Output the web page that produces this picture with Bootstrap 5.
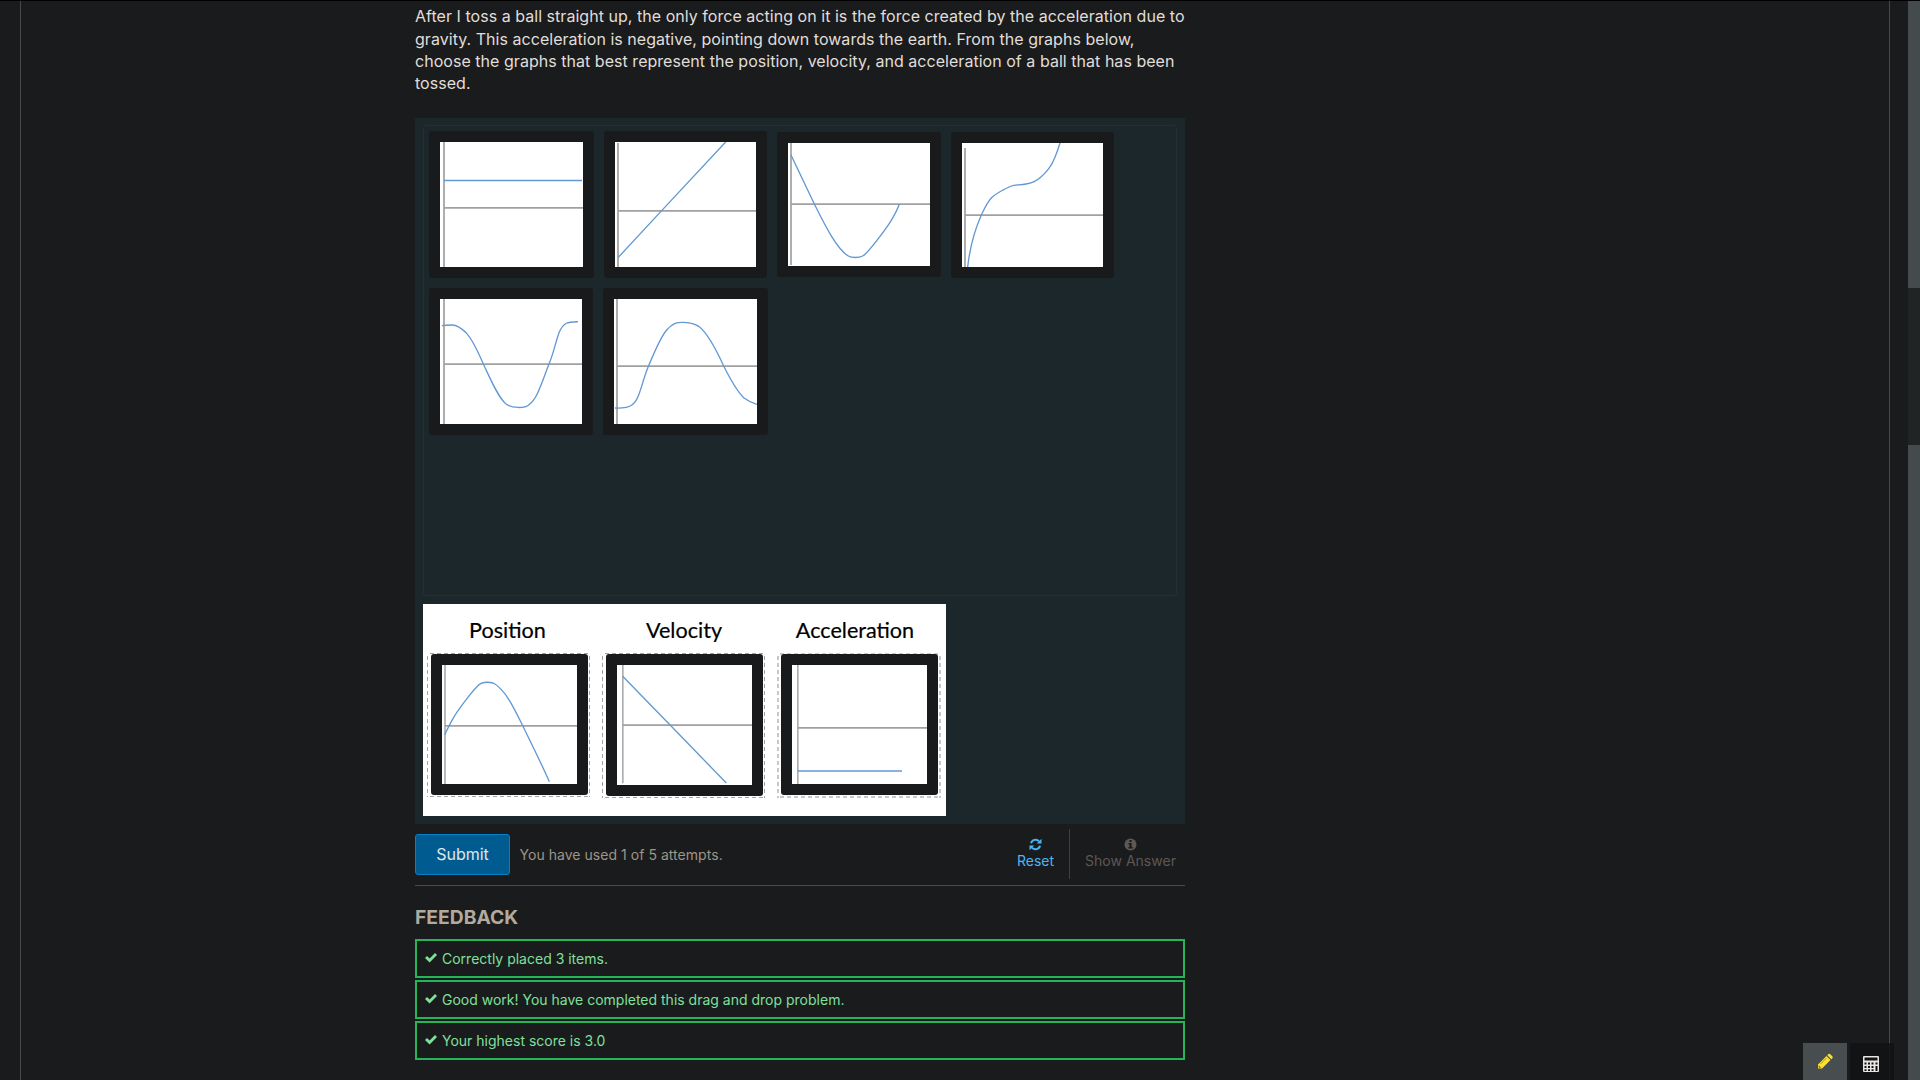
<!DOCTYPE html>
<html lang="en">
<head>
<meta charset="utf-8">
<title>Drag and drop problem</title>
<link href="https://cdn.jsdelivr.net/npm/bootstrap@5.3.0/dist/css/bootstrap.min.css" rel="stylesheet">
<style>
html,body{height:100%;overflow:hidden}
body{background:#1a1b1c;color:#e8e6e3;font-family:Inter,"Liberation Sans",sans-serif;font-size:14px}
.shell{height:1080px;border-top:1px solid #000}
.sheet{width:1870px;margin-left:20px;border:solid #45494b;border-width:0 1px}
.problem{width:770px;margin-left:394px;padding-top:4.200px}
.prompt{font-size:16px;line-height:22.4px;height:112.800px;margin:0;color:#e0deda;white-space:nowrap;letter-spacing:.036px}
.dnd{background:#1c272b;height:706px;padding:7px 8px 8px}
.bank{height:471px;border:1px solid #232f31;border-radius:3px;padding:5px;column-gap:10px;row-gap:10px}
.tile{background:#191a1b;border-radius:3px;padding:11px;display:block}
.tile svg,.glyph{display:block}
.tile svg{background:#fff}
.low{margin-top:1px}
.target{width:523px;height:212px;background:#fff;margin-top:8px;padding-left:4px}
.zone-col{width:175px;flex:none}
.zone-col:last-child{width:164px}
.zone-title{height:49px;padding-top:9px;width:164px;font:21.600px/34px Lato,sans-serif;color:#000;text-align:center;white-space:nowrap;-webkit-text-stroke:.2px #000}
.title-near{padding-right:3px}
.title-far{padding-right:8px}
.zone{--dash:#a4a4a4;--dw:1px;width:163px;height:144px;padding:1px 2px 1px 4px;background:
repeating-linear-gradient(90deg,transparent 0 3px,var(--dash) 3px 7px) 0 0/100% var(--dw) no-repeat,
repeating-linear-gradient(90deg,transparent 0 3px,var(--dash) 3px 7px) 0 100%/100% var(--dw) no-repeat,
repeating-linear-gradient(180deg,transparent 0 3px,var(--dash) 3px 7px) 0 0/var(--dw) 100% no-repeat,
repeating-linear-gradient(180deg,transparent 0 3px,var(--dash) 3px 7px) 100% 0/var(--dw) 100% no-repeat}
.zone .tile{width:157px}
.zone-tall{height:145px}
.zone-soft{--dash:#c8c8c8;--dw:2px;width:164px}
.axis{stroke:#aeaeae;stroke-width:6;fill:none}
.mid{stroke:#a0a0a0;stroke-width:5;fill:none}
.curve{stroke:#6299d2;stroke-width:4;fill:none}
.zone .axis{stroke-width:5}
.actions{height:62px;border-bottom:1px solid #4a4d4e}
.btn-submit{--bs-btn-color:#e0e6ea;--bs-btn-bg:#005b90;--bs-btn-border-color:#0081c9;--bs-btn-border-radius:3px;width:95px;height:41px;margin-top:10px;font-size:16px;padding:0;line-height:39px}
.attempts{color:#9d9588;margin-left:9.500px;font-size:14px;letter-spacing:.04px}
.side-act{height:50px;line-height:16px;font-size:14px;padding-top:9px;margin-top:5px;letter-spacing:.02px}
.side-act span{margin-top:2px}
.reset-act{color:#4cb5f2;width:67px}
.answer-act{color:#5d5853;width:116px;border-left:1px solid #3c4042;padding-left:6px}
.fb-title{font-size:19.300px;line-height:22px;font-weight:700;color:#b2aa9e;margin:20px 0 11px}
.fb-item{height:39px;border:2px solid #24b45a;color:#7fe09c;padding-left:8px;margin-bottom:2px;font-size:14px}
.fb-item svg{margin-right:5px}
.scroll-rail{width:12px;background:#454a4d;padding-top:287px}
.thumb{height:157px;background:#202425}
.tools{left:1803px;top:1043px;gap:3px}
.tool{width:44px;height:37px}
.tool-edit{background:#484d50}
.tool-calc{background:#111213d9}
</style>
<script src="https://cdn.jsdelivr.net/npm/bootstrap@5.3.0/dist/js/bootstrap.bundle.min.js"></script>
</head>
<body>
<div class="shell d-flex justify-content-between">
<main class="sheet">
<section class="problem">
<p class="prompt">After I toss a ball straight up, the only force acting on it is the force created by the acceleration due to<br>gravity. This acceleration is negative, pointing down towards the earth. From the graphs below,<br>choose the graphs that best represent the position, velocity, and acceleration of a ball that has been<br>tossed.</p>
<div class="dnd">
<div class="bank d-flex flex-wrap align-items-start align-content-start">
<div class="tile"><svg width="143" height="125" viewBox="90 96 429 375"><path class="axis" d="M102 96V471"/><path class="mid" d="M102 293.5H519"/><path class="curve" d="M102 211.500H516"/></svg></div>
<div class="tile"><svg width="141" height="125" viewBox="615 96 423 375"><path class="axis" d="M624 99V471"/><path class="mid" d="M624 302.500H1038"/><path class="curve" d="M624 443L755 302L947 96"/></svg></div>
<div class="tile low"><svg width="142" height="123" viewBox="54 99 426 369"><path class="axis" d="M63 99V465"/><path class="mid" d="M63 282.500H480"/><path class="curve" d="M63 135L133 282C160 336 200 418 235 438C246 444 266 444 278 438C294 430 348 356 362 334C373 316 382 300 388 282"/></svg></div>
<div class="tile low"><svg width="141" height="124" viewBox="576 99 423 372"><path class="axis" d="M585 114V471"/><path class="mid" d="M585 315.500H999"/><path class="curve" d="M593 471C600 410 614 360 634 315C645 292 652 276 666 262C682 247 706 236 724 228C734 223 752 226 768 222C789 219 799 214 812 202C828 188 844 169 854 144Q863 122 870 99"/></svg></div>
<div class="tile"><svg width="142" height="125" viewBox="90 87 426 375"><path class="axis" d="M102 87V462"/><path class="mid" d="M102 282.500H516"/><path class="curve" d="M96 167C106 165 116 165 127 165C142 165 160 180 170 190C190 212 205 248 220 282C242 328 264 382 288 402C306 415 344 416 357 404C382 388 398 330 417 282C432 247 437 214 448 186C462 155 476 156 504 155"/></svg></div>
<div class="tile"><svg width="143" height="125" viewBox="612 87 429 375"><path class="axis" d="M621 87V462"/><path class="mid" d="M621 288.500H1041"/><path class="curve" d="M615 414C644 415 656 412 667 404C688 390 694 342 714 292C730 253 750 204 770 180C788 159 800 157 817 157C835 157 852 160 866 169C889 186 919 240 941 288C958 322 978 360 1001 383Q1018 396 1041 403"/></svg></div>
</div>
<div class="target d-flex">
<div class="zone-col"><div class="zone-title title-near">Position</div><div class="zone"><div class="tile"><svg width="135" height="119" viewBox="96 255 405 357"><path class="axis" d="M105 255V612"/><path class="mid" d="M105 437.500H501"/><path class="curve" d="M104 465C109 453 116 440 126 421C140 394 196 319 213 310Q230 304 249 309C263 315 285 338 300 364C318 395 328 417 340 441C360 482 392 546 418 605"/></svg></div></div></div>
<div class="zone-col"><div class="zone-title">Velocity</div><div class="zone zone-tall"><div class="tile"><svg width="135" height="120" viewBox="621 255 405 360"><path class="axis" d="M638.500 255V610"/><path class="mid" d="M638 435.500H1026"/><path class="curve" d="M638 289L781 436L949 609"/></svg></div></div></div>
<div class="zone-col"><div class="zone-title title-far">Acceleration</div><div class="zone zone-tall zone-soft"><div class="tile"><svg width="135" height="119" viewBox="96 255 405 357"><path class="axis" d="M113.500 255V612"/><path class="mid" d="M113 443.500H501"/><path class="curve" d="M113 573H426"/></svg></div></div></div>
</div>
</div>
<div class="actions d-flex">
<button class="btn btn-submit align-self-start">Submit</button>
<span class="attempts align-self-center">You have used 1 of 5 attempts.</span>
<div class="side-act reset-act ms-auto d-flex flex-column align-items-center"><svg class="glyph" width="13" height="13" viewBox="0 0 13 13"><path d="M2 5.300A4.600 4.600 0 0 1 10 3.400M11 7.700A4.600 4.600 0 0 1 3 9.600" fill="none" stroke="currentColor" stroke-width="2"/><path d="M12.500 .8V5.500H7.800ZM.5 12.200V7.500H5.200Z" fill="currentColor"/></svg><span>Reset</span></div>
<div class="side-act answer-act d-flex flex-column align-items-center"><svg class="glyph" width="13" height="13" viewBox="0 0 13 13"><circle cx="6.500" cy="6.500" r="6" fill="currentColor"/><path d="M5.500 2H7.600V4H5.500ZM4.500 5H7.600V9H8.600V10.500H4.500V9H5.500V6.500H4.500Z" fill="#1a1b1c"/></svg><span>Show Answer</span></div>
</div>
<h3 class="fb-title">FEEDBACK</h3>
<div class="fb-item d-flex align-items-center"><svg width="12" height="10" viewBox="0 0 12 10"><path d="M0 5L2 3L4.600 5.500L10 0L12 2L4.600 9.500Z" fill="currentColor"/></svg>Correctly placed 3 items.</div>
<div class="fb-item d-flex align-items-center"><svg width="12" height="10" viewBox="0 0 12 10"><path d="M0 5L2 3L4.600 5.500L10 0L12 2L4.600 9.500Z" fill="currentColor"/></svg>Good work! You have completed this drag and drop problem.</div>
<div class="fb-item d-flex align-items-center"><svg width="12" height="10" viewBox="0 0 12 10"><path d="M0 5L2 3L4.600 5.500L10 0L12 2L4.600 9.500Z" fill="currentColor"/></svg>Your highest score is 3.0</div>
</section>
</main>
<div class="scroll-rail"><div class="thumb"></div></div>
</div>
<div class="tools position-absolute d-flex">
<div class="tool tool-edit"><svg class="glyph" width="44" height="37" viewBox="0 0 44 37"><path d="M15 25.500V21.500L23.500 13L27.500 17L19 25.500ZM24.300 12.200L25.500 11Q26.300 10.500 27 11L29.500 13.500Q30 14.300 29.500 15L28.300 16.200Z" fill="#fde02f"/><path d="M16 22.800L17.700 24.500H16ZM17.500 21L23.500 15" stroke="#8a8232" stroke-width=".8" fill="#484d50"/></svg></div>
<div class="tool tool-calc"><svg class="glyph" width="44" height="37" viewBox="0 0 44 37"><rect x="13" y="13" width="16" height="16" rx="1" fill="#e8e6e3"/><path d="M14.500 14.500H27.500V17.500H14.500ZM14.500 19.500H16.500V21.500H14.500ZM18 19.500H20V21.500H18ZM21.500 19.500H23.500V21.500H21.500ZM25.500 19.500H27.500V21.500H25.500ZM14.500 23H16.500V25H14.500ZM18 23H20V25H18ZM21.500 23H23.500V25H21.500ZM14.500 26.300H16.500V28H14.500ZM18 26.300H20V28H18ZM21.500 26.300H23.500V28H21.500ZM25.500 23H27.500V28H25.500Z" fill="#111213"/></svg></div>
</div>
</body>
</html>
